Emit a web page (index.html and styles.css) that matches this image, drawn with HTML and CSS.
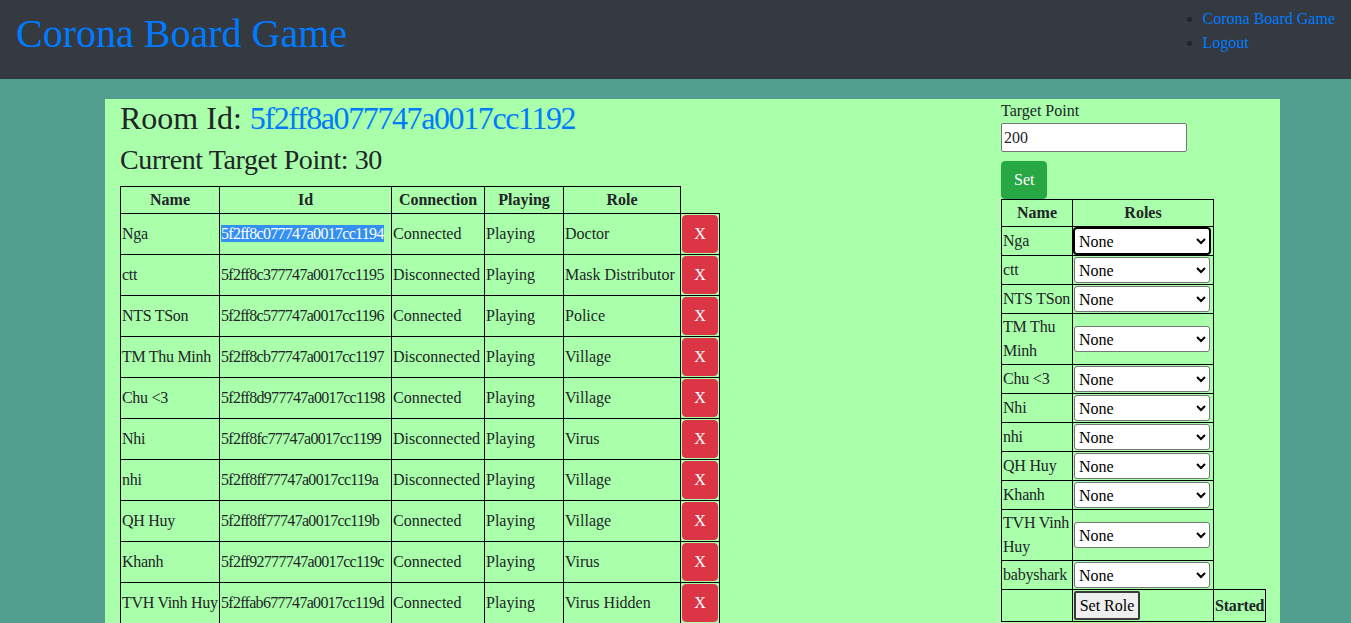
FILE: index.html
```html
<!DOCTYPE html>
<html lang="en">
<head>
<meta charset="utf-8">
<title>Corona Board Game</title>
<link rel="stylesheet" href="styles.css">
</head>
<body>
<header class="topbar">
  <h1 class="brand">Corona Board Game</h1>
  <ul class="nav">
    <li><a href="#">Corona Board Game</a></li>
    <li><a href="#">Logout</a></li>
  </ul>
</header>
<main class="room">
  <section class="room-main">
    <h2 class="room-title">Room Id: <span class="room-id">5f2ff8a077747a0017cc1192</span></h2>
    <h3 class="target-title">Current Target Point: 30</h3>
    <table class="players">
      <colgroup>
        <col class="c-name"><col class="c-id"><col class="c-conn"><col class="c-play"><col class="c-role"><col class="c-x">
      </colgroup>
      <tr><th>Name</th><th>Id</th><th>Connection</th><th>Playing</th><th>Role</th></tr>
      <tr><td class="name">Nga</td><td class="pid"><span class="selected">5f2ff8c077747a0017cc1194</span></td><td>Connected</td><td>Playing</td><td>Doctor</td><td class="xcell"><button class="btn-x">X</button></td></tr>
      <tr><td class="name">ctt</td><td class="pid">5f2ff8c377747a0017cc1195</td><td>Disconnected</td><td>Playing</td><td>Mask Distributor</td><td class="xcell"><button class="btn-x">X</button></td></tr>
      <tr><td class="name">NTS TSon</td><td class="pid">5f2ff8c577747a0017cc1196</td><td>Connected</td><td>Playing</td><td>Police</td><td class="xcell"><button class="btn-x">X</button></td></tr>
      <tr><td class="name">TM Thu Minh</td><td class="pid">5f2ff8cb77747a0017cc1197</td><td>Disconnected</td><td>Playing</td><td>Village</td><td class="xcell"><button class="btn-x">X</button></td></tr>
      <tr><td class="name">Chu &lt;3</td><td class="pid">5f2ff8d977747a0017cc1198</td><td>Connected</td><td>Playing</td><td>Village</td><td class="xcell"><button class="btn-x">X</button></td></tr>
      <tr><td class="name">Nhi</td><td class="pid">5f2ff8fc77747a0017cc1199</td><td>Disconnected</td><td>Playing</td><td>Virus</td><td class="xcell"><button class="btn-x">X</button></td></tr>
      <tr><td class="name">nhi</td><td class="pid">5f2ff8ff77747a0017cc119a</td><td>Disconnected</td><td>Playing</td><td>Village</td><td class="xcell"><button class="btn-x">X</button></td></tr>
      <tr><td class="name">QH Huy</td><td class="pid">5f2ff8ff77747a0017cc119b</td><td>Connected</td><td>Playing</td><td>Village</td><td class="xcell"><button class="btn-x">X</button></td></tr>
      <tr><td class="name">Khanh</td><td class="pid">5f2ff92777747a0017cc119c</td><td>Connected</td><td>Playing</td><td>Virus</td><td class="xcell"><button class="btn-x">X</button></td></tr>
      <tr><td class="name">TVH Vinh Huy</td><td class="pid">5f2ffab677747a0017cc119d</td><td>Connected</td><td>Playing</td><td>Virus Hidden</td><td class="xcell"><button class="btn-x">X</button></td></tr>
    </table>
  </section>
  <aside class="room-side">
    <label class="field-label" for="target">Target Point</label>
    <input class="field-input" id="target" type="text" value="200">
    <button class="btn-set">Set</button>
    <table class="roles">
      <colgroup><col class="r-name"><col class="r-role"><col class="r-extra"></colgroup>
      <tr><th>Name</th><th>Roles</th></tr>
      <tr><td class="rname">Nga</td><td class="rsel"><select class="role-select is-focused"><option>None</option></select></td></tr>
      <tr><td class="rname">ctt</td><td class="rsel"><select class="role-select"><option>None</option></select></td></tr>
      <tr><td class="rname">NTS TSon</td><td class="rsel"><select class="role-select"><option>None</option></select></td></tr>
      <tr><td class="rname wrap">TM Thu Minh</td><td class="rsel"><select class="role-select"><option>None</option></select></td></tr>
      <tr><td class="rname">Chu &lt;3</td><td class="rsel"><select class="role-select"><option>None</option></select></td></tr>
      <tr><td class="rname">Nhi</td><td class="rsel"><select class="role-select"><option>None</option></select></td></tr>
      <tr><td class="rname">nhi</td><td class="rsel"><select class="role-select"><option>None</option></select></td></tr>
      <tr><td class="rname">QH Huy</td><td class="rsel"><select class="role-select"><option>None</option></select></td></tr>
      <tr><td class="rname">Khanh</td><td class="rsel"><select class="role-select"><option>None</option></select></td></tr>
      <tr><td class="rname wrap">TVH Vinh Huy</td><td class="rsel"><select class="role-select"><option>None</option></select></td></tr>
      <tr><td class="rname">babyshark</td><td class="rsel"><select class="role-select"><option>None</option></select></td></tr>
      <tr><td></td><td class="rsel"><button class="btn-setrole">Set Role</button></td><th class="started">Started</th></tr>
    </table>
  </aside>
</main>
</body>
</html>
```

FILE: styles.css
```css
html, body {
  margin: 0;
  padding: 0;
}

body {
  background: #529e8e;
  color: #212529;
  font-family: "Liberation Serif", "Times New Roman", serif;
  font-size: 16px;
  line-height: 24px;
}

a {
  color: #007bff;
  text-decoration: none;
}

.topbar {
  background: #343a40;
  height: 79px;
  box-sizing: border-box;
  padding: 7px 16px 0 16px;
  display: flex;
  justify-content: space-between;
  align-items: flex-start;
}

.brand {
  margin: 3px 0 0 0;
  font-size: 40px;
  line-height: 48px;
  font-weight: 400;
  color: #007bff;
}

.nav {
  margin: 0;
  padding-left: 40px;
  color: #212529;
}

.room {
  margin: 20px 0 0 105px;
  width: 1175px;
  box-sizing: border-box;
  background: #aaffaa;
  padding: 0 15px;
  display: flex;
  align-items: flex-start;
}

.room-main {
  width: 881px;
}

.room-title {
  margin: 0 0 6px 0;
  font-size: 32px;
  line-height: 38px;
  font-weight: 400;
}

.room-id {
  color: #007bff;
  letter-spacing: -1.4px;
}

.target-title {
  margin: 0 0 9px 0;
  font-size: 28px;
  line-height: 34px;
  font-weight: 400;
  letter-spacing: -0.4px;
}

.players {
  border-collapse: collapse;
  table-layout: fixed;
  width: 599px;
}

.players th,
.players td,
.roles th,
.roles td {
  border: 1px solid #000;
  padding: 1px;
  vertical-align: middle;
}

.players th {
  text-align: center;
  font-weight: 700;
}

.players td {
  text-align: left;
  white-space: nowrap;
}

.c-name { width: 99px; }
.c-id { width: 172px; }
.c-conn { width: 93px; }
.c-play { width: 79px; }
.c-role { width: 117px; }
.c-x { width: 39px; }

.players .name {
  letter-spacing: -0.3px;
}

.players .pid {
  letter-spacing: -0.7px;
}

.selected {
  background: #338ff0;
  color: #fff;
}

.players .xcell {
  padding: 1px;
}

.btn-x {
  display: block;
  width: 36px;
  height: 38px;
  padding: 0;
  border: 1px solid #dc3545;
  border-radius: 4px;
  background: #dc3545;
  color: #fff;
  font-family: inherit;
  font-size: 16px;
  line-height: 24px;
}

.room-side {
  width: 264px;
}

.field-label {
  display: block;
  line-height: 24px;
}

.field-input {
  display: block;
  width: 186px;
  height: 29px;
  box-sizing: border-box;
  margin: 0 0 9px 0;
  padding: 1px 2px;
  border: 1px solid #767676;
  border-radius: 2px;
  background: #fff;
  font-family: inherit;
  font-size: 16px;
  color: #212529;
}

.btn-set {
  display: block;
  height: 38px;
  padding: 6px 12px;
  border: 1px solid #28a745;
  border-radius: 4px;
  background: #28a745;
  color: #fff;
  font-family: inherit;
  font-size: 16px;
  line-height: 24px;
}

.roles {
  border-collapse: collapse;
  table-layout: fixed;
  width: 264px;
}

.r-name { width: 71px; }
.r-role { width: 141px; }
.r-extra { width: 52px; }

.roles th {
  text-align: center;
  font-weight: 700;
}

.roles .rname {
  white-space: nowrap;
  text-align: left;
  letter-spacing: -0.2px;
}

.roles .rname.wrap {
  white-space: normal;
}

.role-select {
  display: block;
  width: 136px;
  height: 26px;
  box-sizing: border-box;
  border: 1px solid #767676;
  border-radius: 3px;
  background: #fff;
  color: #000;
  font-family: inherit;
  font-size: 16px;
}

.role-select.is-focused {
  border: 1px solid #000;
  box-shadow: 0 0 0 1px #000;
}

.btn-setrole {
  display: block;
  width: 66px;
  height: 29px;
  padding: 0;
  border: 2px solid #3a3a3a;
  border-radius: 2px;
  background: #efefef;
  color: #000;
  font-family: inherit;
  font-size: 16px;
}

.roles .started {
  text-align: left;
  font-weight: 700;
  letter-spacing: -0.2px;
}
```
